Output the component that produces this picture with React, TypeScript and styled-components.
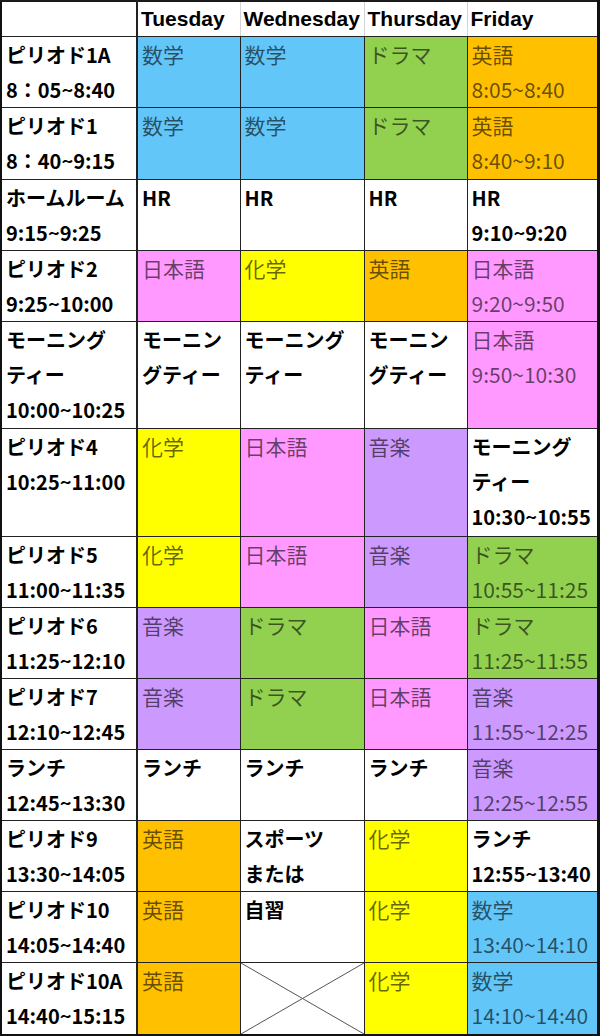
import React from 'react';
import styled, { createGlobalStyle } from 'styled-components';

type Tone = 'blue' | 'green' | 'orange' | 'pink' | 'yellow' | 'purple' | 'white' | 'cross';

type Slot = { tone: Tone; lines: string[] };

type Period = { label: string[]; slots: Slot[]; h: number };

const GlobalStyle = createGlobalStyle`
  html, body {
    margin: 0;
    padding: 0;
    background: #ffffff;
  }
  body {
    font-family: "Noto Sans CJK JP", "Noto Sans", sans-serif;
  }
`;

const fills: Record<Tone, string> = {
  blue: '#63c6f9',
  green: '#92d050',
  orange: '#ffc000',
  pink: '#ff99ff',
  yellow: '#ffff00',
  purple: '#cc99ff',
  white: '#ffffff',
  cross: '#ffffff',
};

const days = ['Tuesday', 'Wednesday', 'Thursday', 'Friday'];

const s = (tone: Tone, ...lines: string[]): Slot => ({ tone, lines });

const periods: Period[] = [
  {
    h: 71,
    label: ['ピリオド1A', '8：05~8:40'],
    slots: [s('blue', '数学'), s('blue', '数学'), s('green', 'ドラマ'), s('orange', '英語', '8:05~8:40')],
  },
  {
    h: 72,
    label: ['ピリオド1', '8：40~9:15'],
    slots: [s('blue', '数学'), s('blue', '数学'), s('green', 'ドラマ'), s('orange', '英語', '8:40~9:10')],
  },
  {
    h: 70,
    label: ['ホームルーム', '9:15~9:25'],
    slots: [s('white', 'HR'), s('white', 'HR'), s('white', 'HR'), s('white', 'HR', '9:10~9:20')],
  },
  {
    h: 71,
    label: ['ピリオド2', '9:25~10:00'],
    slots: [s('pink', '日本語'), s('yellow', '化学'), s('orange', '英語'), s('pink', '日本語', '9:20~9:50')],
  },
  {
    h: 107,
    label: ['モーニング', 'ティー', '10:00~10:25'],
    slots: [
      s('white', 'モーニン', 'グティー'),
      s('white', 'モーニング', 'ティー'),
      s('white', 'モーニン', 'グティー'),
      s('pink', '日本語', '9:50~10:30'),
    ],
  },
  {
    h: 108,
    label: ['ピリオド4', '10:25~11:00'],
    slots: [s('yellow', '化学'), s('pink', '日本語'), s('purple', '音楽'), s('white', 'モーニング', 'ティー', '10:30~10:55')],
  },
  {
    h: 70,
    label: ['ピリオド5', '11:00~11:35'],
    slots: [s('yellow', '化学'), s('pink', '日本語'), s('purple', '音楽'), s('green', 'ドラマ', '10:55~11:25')],
  },
  {
    h: 71,
    label: ['ピリオド6', '11:25~12:10'],
    slots: [s('purple', '音楽'), s('green', 'ドラマ'), s('pink', '日本語'), s('green', 'ドラマ', '11:25~11:55')],
  },
  {
    h: 71,
    label: ['ピリオド7', '12:10~12:45'],
    slots: [s('purple', '音楽'), s('green', 'ドラマ'), s('pink', '日本語'), s('purple', '音楽', '11:55~12:25')],
  },
  {
    h: 71,
    label: ['ランチ', '12:45~13:30'],
    slots: [s('white', 'ランチ'), s('white', 'ランチ'), s('white', 'ランチ'), s('purple', '音楽', '12:25~12:55')],
  },
  {
    h: 71,
    label: ['ピリオド9', '13:30~14:05'],
    slots: [s('orange', '英語'), s('white', 'スポーツ', 'または'), s('yellow', '化学'), s('white', 'ランチ', '12:55~13:40')],
  },
  {
    h: 70,
    label: ['ピリオド10', '14:05~14:40'],
    slots: [s('orange', '英語'), s('white', '自習'), s('yellow', '化学'), s('blue', '数学', '13:40~14:10')],
  },
  {
    h: 73,
    label: ['ピリオド10A', '14:40~15:15'],
    slots: [s('orange', '英語'), s('cross'), s('yellow', '化学'), s('blue', '数学', '14:10~14:40')],
  },
];

const Table = styled.table`
  width: 600px;
  table-layout: fixed;
  border-collapse: collapse;
  border-top: 2px solid #1a1a1a;
  border-left: 2px solid #111;
  border-right: 3px solid #111;
  border-bottom: 3px solid #111;
`;

const Row = styled.tr<{ $h: number }>`
  height: ${(p) => p.$h}px;
`;

const Corner = styled.th`
  height: 34px;
  padding: 0;
  border-right: 2px solid #222;
  border-bottom: 1px solid #222;
  background: #fff;
`;

const DayHead = styled.th`
  height: 34px;
  padding: 0 0 0 3px;
  text-align: left;
  font-family: "Liberation Sans", Arial, sans-serif;
  font-weight: bold;
  font-size: 21px;
  line-height: 34px;
  color: #000;
  white-space: nowrap;
  overflow: hidden;
  border-left: 1px solid #d4d4d4;
  border-bottom: 1px solid #222;
  background: #fff;
`;

const LabelCell = styled.th`
  padding: 0 0 0 4px;
  text-align: left;
  vertical-align: top;
  font-weight: bold;
  font-size: 20px;
  color: #000;
  white-space: nowrap;
  border-right: 2px solid #222;
  border-bottom: 1px solid #222;
  background: #fff;
`;

const SlotCell = styled.td<{ $tone: Tone }>`
  padding: 0 0 0 4px;
  vertical-align: top;
  white-space: nowrap;
  overflow: hidden;
  border: 1px solid #222;
  background: ${(p) => fills[p.$tone]};
  font-size: ${(p) => (p.$tone === 'white' ? '20px' : '21px')};
  font-weight: ${(p) => (p.$tone === 'white' ? 'bold' : 'normal')};
  color: ${(p) => (p.$tone === 'white' ? '#000' : 'rgba(0, 0, 0, 0.6)')};
`;

const CrossCell = styled.td`
  padding: 0;
  border: 1px solid #222;
  background: #fff;
`;

const Line = styled.div`
  display: block;
  height: 35px;
  line-height: 35px;
`;

const Cross = styled.svg`
  display: block;
  width: 100%;
  height: 71px;
`;

function SlotView({ slot }: { slot: Slot }) {
  if (slot.tone === 'cross') {
    return (
      <CrossCell>
        <Cross viewBox="0 0 100 100" preserveAspectRatio="none">
          <line x1="0" y1="0" x2="100" y2="100" stroke="#555" strokeWidth="1" vectorEffect="non-scaling-stroke" />
          <line x1="100" y1="0" x2="0" y2="100" stroke="#555" strokeWidth="1" vectorEffect="non-scaling-stroke" />
        </Cross>
      </CrossCell>
    );
  }
  return (
    <SlotCell $tone={slot.tone}>
      {slot.lines.map((t, i) => (
        <Line key={i}>{t}</Line>
      ))}
    </SlotCell>
  );
}

export default function App() {
  return (
    <>
      <GlobalStyle />
      <Table>
        <colgroup>
          <col style={{ width: 136 }} />
          <col style={{ width: 103 }} />
          <col style={{ width: 124 }} />
          <col style={{ width: 103 }} />
          <col />
        </colgroup>
        <thead>
          <tr>
            <Corner />
            {days.map((d) => (
              <DayHead key={d}>{d}</DayHead>
            ))}
          </tr>
        </thead>
        <tbody>
          {periods.map((p, i) => (
            <Row key={i} $h={p.h}>
              <LabelCell>
                {p.label.map((t, j) => (
                  <Line key={j}>{t}</Line>
                ))}
              </LabelCell>
              {p.slots.map((slot, j) => (
                <SlotView key={j} slot={slot} />
              ))}
            </Row>
          ))}
        </tbody>
      </Table>
    </>
  );
}
